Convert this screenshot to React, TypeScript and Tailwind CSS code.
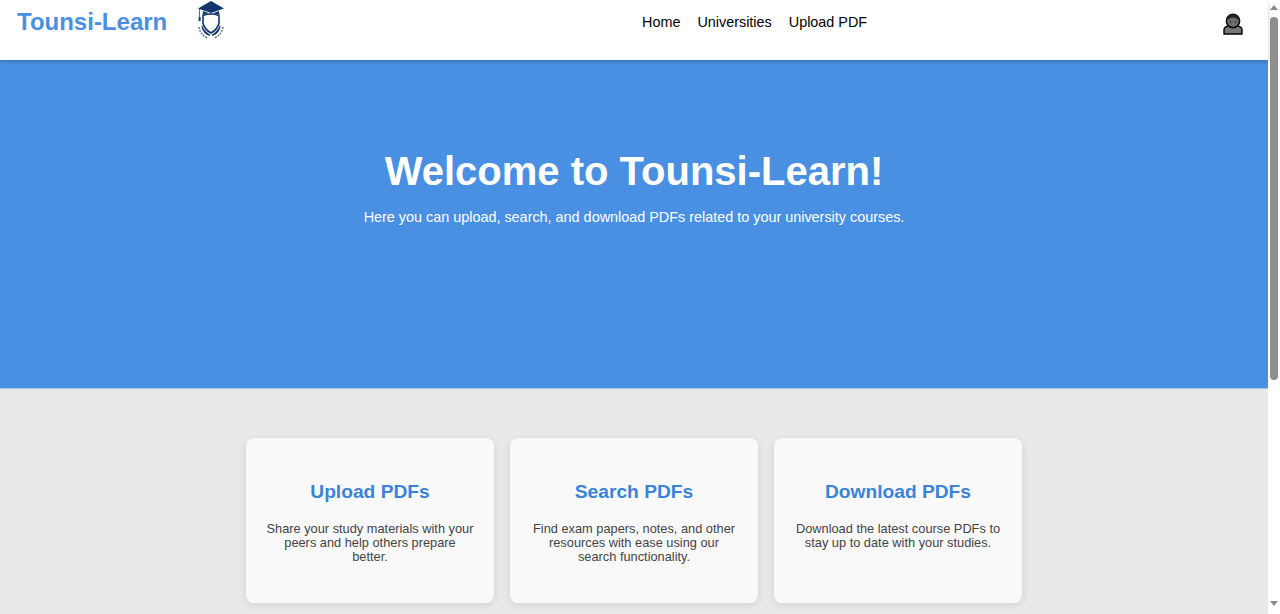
import React from "react";

function Logo() {
  return (
    <svg width="30" height="42" viewBox="0 0 30 42" className="block">
      <path d="M15 1 L28 8.5 L15 13 L2 8.5 Z" fill="#12366b" />
      <path d="M7 11 L15 14 L23 11 L23.5 15 Q15 11.5 6.5 15 Z" fill="#12366b" />
      <path d="M3.6 9 L3.6 17" stroke="#12366b" strokeWidth="0.8" fill="none" />
      <rect x="2.6" y="17" width="2" height="4" fill="#12366b" />
      <path d="M7 15.5 Q15 12.5 23 15.5 L23 23 Q22 29 15 33 Q8 29 7 23 Z" fill="#ffffff" stroke="#12366b" strokeWidth="1.6" />
      <path d="M6 25 Q8 31 14 34.5 L14 36 Q7 34 5.5 27 Z" fill="#12366b" />
      <path d="M24 25 Q22 31 16 34.5 L16 36 Q23 34 24.5 27 Z" fill="#12366b" />
      <path d="M3 27 Q4 34 11 38" stroke="#7d8a99" strokeWidth="1.8" strokeDasharray="2 1" fill="none" />
      <path d="M27 27 Q26 34 19 38" stroke="#7d8a99" strokeWidth="1.8" strokeDasharray="2 1" fill="none" />
    </svg>
  );
}

function UserIcon() {
  return (
    <svg width="20" height="24" viewBox="0 0 20 24" className="block">
      <path d="M1 22 L1 18 Q1 14.5 6 14 L14 14 Q19 14.5 19 18 L19 22 Z" fill="#777" stroke="#000" strokeWidth="1.4" />
      <circle cx="10" cy="9" r="6.6" fill="#6e6e6e" stroke="#111" strokeWidth="1.6" />
      <path d="M3.5 8.5 Q5 2.5 10 2.5 Q15 2.5 16.5 8.5 Q13 5.5 10 5.5 Q7 5.5 3.5 8.5 Z" fill="#222" />
      <circle cx="7.6" cy="10" r="0.8" fill="#222" />
      <circle cx="12.4" cy="10" r="0.8" fill="#222" />
    </svg>
  );
}

const cards = [
  { t: "Upload PDFs", d: "Share your study materials with your peers and help others prepare better." },
  { t: "Search PDFs", d: "Find exam papers, notes, and other resources with ease using our search functionality." },
  { t: "Download PDFs", d: "Download the latest course PDFs to stay up to date with your studies." },
];

export default function App() {
  return (
    <div className="flex h-[614px] overflow-hidden bg-white font-['Liberation_Sans',Arial,sans-serif]">
      <div className="flex w-[1268px] flex-col">
        <header className="relative z-10 flex h-[60px] items-start bg-white shadow-[0_2px_4px_rgba(0,0,0,0.2)]">
          <div className="flex w-[400px] items-start pl-[17px]">
            <span className="mt-[8px] text-[24px] leading-[28px] font-bold text-[#4a90e2]">Tounsi-Learn</span>
            <div className="ml-[19px] flex h-[50px] w-[50px] justify-center">
              <Logo />
            </div>
          </div>
          <nav className="mt-[14px] ml-[242px] flex gap-[17px] text-[14.4px] leading-[16px] text-black">
            <span>Home</span>
            <span>Universities</span>
            <span>Upload PDF</span>
          </nav>
          <div className="mt-[12px] ml-auto mr-[25px]">
            <UserIcon />
          </div>
        </header>
        <section className="flex h-[329px] flex-col items-center border-b border-[#a9c8ee] bg-[#4a90e2] pt-[88px] text-white">
          <h1 className="text-[40px] leading-[46px] font-bold">Welcome to Tounsi-Learn!</h1>
          <p className="mt-[15px] text-[14.4px] leading-[17px]">
            Here you can upload, search, and download PDFs related to your university courses.
          </p>
        </section>
        <section className="flex flex-1 justify-center gap-[16px] bg-[#e9e9e9] pt-[49px]">
          {cards.map((c) => (
            <div
              key={c.t}
              className="flex h-[165px] w-[248px] flex-col items-center rounded-[8px] bg-[#f9f9f9] px-[20px] pt-[43px] text-center shadow-[0_2px_8px_rgba(0,0,0,0.1)]"
            >
              <h2 className="text-[19.2px] leading-[22px] font-bold text-[#3a84d8]">{c.t}</h2>
              <p className="mt-[19px] text-[12.8px] leading-[14px] text-[#444]">{c.d}</p>
            </div>
          ))}
        </section>
      </div>
      <div className="flex w-[12px] flex-col items-center bg-white">
        <div className="mt-[5px] h-0 w-0 border-x-[4px] border-b-[5px] border-x-transparent border-b-[#8a8a8a]" />
        <div className="mt-[7px] h-[363px] w-[8px] rounded-[4px] bg-[#8e8e8e]" />
        <div className="mt-auto mb-[8px] h-0 w-0 border-x-[4px] border-t-[5px] border-x-transparent border-t-[#8a8a8a]" />
      </div>
    </div>
  );
}
